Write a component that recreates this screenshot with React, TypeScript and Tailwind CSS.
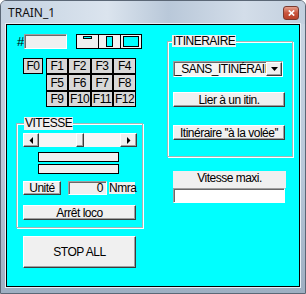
import React from 'react';

// Raised Windows-classic button
function Btn({ className = '', children }: { className?: string; children?: React.ReactNode }) {
    return (
        <div
            className={`flex items-center justify-center bg-[#f0f0f0] border border-t-white border-l-white border-r-[#3c3c3c] border-b-[#3c3c3c] shadow-[inset_-1px_-1px_0_#a0a0a0] text-black ${className}`}
        >
            {children}
        </div>
    );
}

// Sunken edit box
function Field({ className = '', children }: { className?: string; children?: React.ReactNode }) {
    return (
        <div
            className={`flex items-center border border-t-[#a0a0a0] border-l-[#a0a0a0] border-r-white border-b-white shadow-[inset_1px_1px_0_#696969] ${className}`}
        >
            {children}
        </div>
    );
}

function Arrow({ dir }: { dir: 'left' | 'right' | 'down' }) {
    if (dir === 'left') return <svg width="4" height="7" viewBox="0 0 4 7"><path d="M4 0V7L0.5 3.5Z" fill="#000" /></svg>;
    if (dir === 'right') return <svg width="4" height="7" viewBox="0 0 4 7"><path d="M0 0V7L3.5 3.5Z" fill="#000" /></svg>;
    return <svg width="7" height="4" viewBox="0 0 7 4"><path d="M0 0H7L3.5 4Z" fill="#000" /></svg>;
}

const fkeys = [
    ['F1', 'F2', 'F3', 'F4'],
    ['F5', 'F6', 'F7', 'F8'],
    ['F9', 'F10', 'F11', 'F12'],
];

export default function App() {
    return (
        <div className="w-[306px] h-[294px] flex flex-col border border-[#5b6776] rounded-t-[6px] bg-[linear-gradient(180deg,#cbd7e4,#b8c7d8_60%,#9eafc2)] font-['Liberation_Sans',Arial,sans-serif] text-[12px] tracking-[-0.5px] text-black overflow-hidden">
            {/* title bar */}
            <div className="h-[23px] shrink-0 flex items-center justify-between pl-[7px] pr-[6px] bg-[linear-gradient(90deg,#c4d2e1,#dbe4ee_35%,#b9c8d9_55%,#d3dde9_80%,#c2cfde)]">
                <span className="font-['Noto_Sans',sans-serif] text-[12px] tracking-normal text-[#111] pt-[1px]">TRAIN_1</span>
                <div className="w-[16px] h-[14px] rounded-[3px] border border-[#7a3a30] bg-[linear-gradient(180deg,#e6a18e,#c9543d_50%,#b84129)] flex items-center justify-center">
                    <svg width="7" height="6" viewBox="0 0 7 6">
                        <path d="M0.8 0.5L6.2 5.5M6.2 0.5L0.8 5.5" stroke="#fff" strokeWidth="1.7" />
                    </svg>
                </div>
            </div>

            {/* client area */}
            <div className="ml-[5px] w-[294px] h-[263px] border border-black bg-[#00ffff] shadow-[0_0_0_1px_#e8eef5] flex items-start pl-[9px] pt-[9px]">
                {/* left column */}
                <div className="w-[127px] flex flex-col">
                    <div className="flex items-center h-[15px]">
                        <span className="w-[7px] ml-[1px] text-[13px] leading-none">#</span>
                        <Field className="w-[43px] h-[15px] bg-[#f0f0f0]" />
                        <div className="ml-[9px] w-[66px] h-[15px] flex border border-black bg-[#f0f0f0]">
                            <div className="w-[22px] h-full flex justify-center pt-[1px] border-r border-black">
                                <div className="w-[9px] h-[3px] border border-black bg-[#00ffff]" />
                            </div>
                            <div className="w-[22px] h-full flex items-center justify-center border-r border-black">
                                <div className="w-[7px] h-[11px] border border-black bg-[#00ffff]" />
                            </div>
                            <div className="flex-1 h-full flex items-center justify-center">
                                <div className="w-[16px] h-[11px] border border-black bg-[#00ffff]" />
                            </div>
                        </div>
                    </div>

                    {/* function keys */}
                    <div className="mt-[9px] ml-[7px] flex">
                        <div className="w-[20px] h-[16px] border border-black bg-[#d8d8d8] flex items-center justify-center text-[12px]">F0</div>
                        <div className="ml-[3px] grid grid-cols-[22px_23px_22px_23px] grid-rows-[16px_17px_16px]">
                            {fkeys.flat().map((k) => (
                                <div key={k} className="border border-black bg-[#d8d8d8] flex items-center justify-center text-[12px]">{k}</div>
                            ))}
                        </div>
                    </div>

                    {/* VITESSE */}
                    <fieldset className="mt-[10px] border border-[#a8b4b4] shadow-[inset_1px_1px_0_#fff,1px_1px_0_#fff] pb-[7px]">
                        <legend className="ml-[7px] px-[1px] bg-[#f0f0f0] leading-[13px]">VITESSE</legend>
                        <div className="mt-[3px] ml-[6px] w-[114px] h-[14px] flex bg-[#f4f4f4]">
                            <Btn className="w-[16px] h-full"><Arrow dir="left" /></Btn>
                            <div className="flex-1 flex bg-[#f6f6f6]">
                                <div className="w-[37px]" />
                                <Btn className="w-[8px] h-full" />
                            </div>
                            <Btn className="w-[17px] h-full"><Arrow dir="right" /></Btn>
                        </div>
                        <div className="mt-[5px] ml-[21px] w-[81px] h-[10px] border border-black bg-[#f0f0f0]" />
                        <div className="mt-[2px] ml-[21px] w-[81px] h-[10px] border border-black bg-[#f0f0f0]" />
                        <div className="mt-[7px] ml-[6px] flex items-center h-[14px]">
                            <Btn className="w-[38px] h-[14px]">Unité</Btn>
                            <Field className="ml-[7px] w-[39px] h-[14px] bg-[#f0f0f0] justify-end pr-[3px]">0</Field>
                            <div className="ml-[2px] w-[26px] h-[12px] bg-[#f0f0f0] flex items-center leading-none">Nmra</div>
                        </div>
                        <Btn className="mt-[10px] ml-[6px] w-[113px] h-[15px]">Arrêt loco</Btn>
                    </fieldset>

                    <Btn className="mt-[8px] ml-[7px] w-[113px] h-[32px]">STOP ALL</Btn>
                </div>

                {/* right column */}
                <div className="ml-[24px] mt-[1px] w-[126px] flex flex-col">
                    <fieldset className="border border-[#a8b4b4] shadow-[inset_1px_1px_0_#fff,1px_1px_0_#fff] pb-[16px]">
                        <legend className="ml-[4px] px-[1px] bg-[#f0f0f0] leading-[12px]">ITINERAIRE</legend>
                        <Field className="mt-[14px] ml-[5px] w-[110px] h-[16px] bg-[#f4f4f4] overflow-hidden">
                            <span className="pl-[1px] whitespace-nowrap overflow-hidden w-[93px]">_SANS_ITINÉRAIRE</span>
                            <Btn className="w-[16px] h-[14px] shrink-0"><Arrow dir="down" /></Btn>
                        </Field>
                        <Btn className="mt-[15px] ml-[5px] w-[112px] h-[15px]">Lier à un itin.</Btn>
                        <Btn className="mt-[18px] ml-[5px] w-[112px] h-[15px]">Itinéraire ''à la volée''</Btn>
                    </fieldset>

                    <div className="mt-[14px] ml-[6px] w-[113px] h-[17px] bg-[#f0f0f0] flex justify-center leading-[15px]">Vitesse maxi.</div>
                    <Field className="ml-[6px] w-[112px] h-[15px] bg-white" />
                </div>
            </div>
        </div>
    );
}
